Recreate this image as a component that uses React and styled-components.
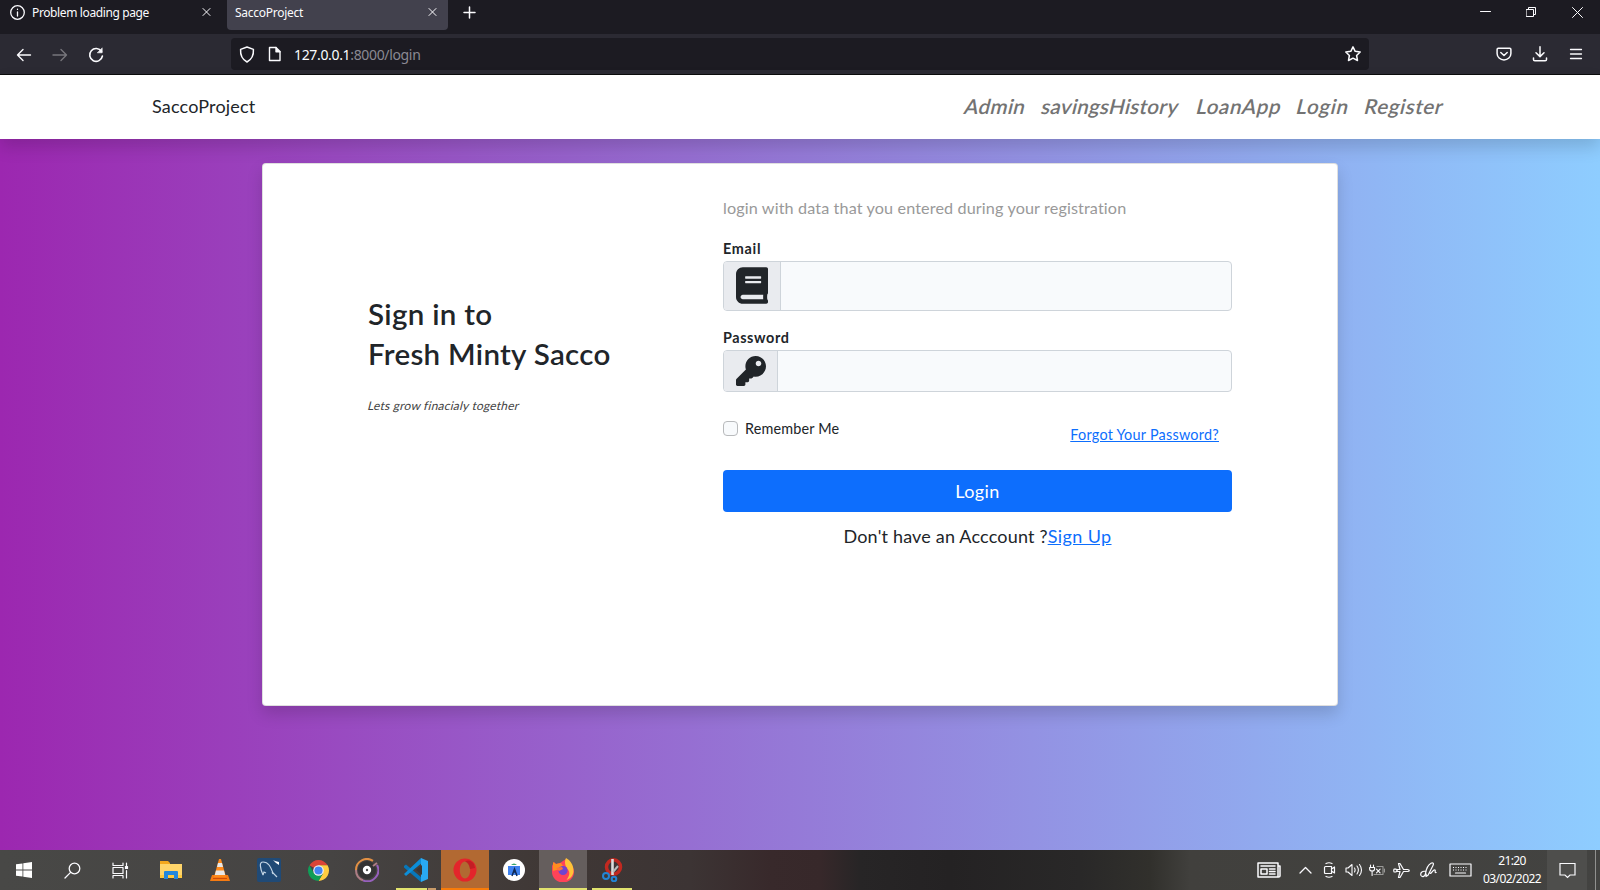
import React from "react";
import styled, { createGlobalStyle, css } from "styled-components";

const Global = createGlobalStyle`
  * { box-sizing: border-box; }
  body { margin: 0; overflow: hidden; font-family: Lato, "Noto Sans", sans-serif; color: #212529; }
  svg { display: block; flex: none; }
`;

const Screen = styled.div`
  width: 1600px;
  height: 890px;
  display: flex;
  flex-direction: column;
`;

/* ---------- browser chrome ---------- */
const TabBar = styled.div`
  height: 34px;
  display: flex;
  align-items: flex-start;
  background: #1c1b22;
  color: #fbfbfe;
  font: 12px/26px "Noto Sans", sans-serif;
`;
const Tab = styled.div`
  width: ${(p) => p.$w}px;
  height: 30px;
  display: flex;
  align-items: center;
  padding: 0 11px 5px ${(p) => (p.$active ? 8 : 10)}px;
  background: ${(p) => (p.$active ? "#42414d" : "transparent")};
  border-radius: 0 0 4px 4px;
`;
const TabTitle = styled.span`
  flex: 1;
  white-space: nowrap;
  letter-spacing: ${(p) => p.$ls || 0}px;
  padding-left: ${(p) => p.$pad || 0}px;
  padding-top: 1px;
`;
const NewTab = styled.div`
  padding: 6px 0 0 15px;
  flex: 1;
`;
const WindowButtons = styled.div`
  display: flex;
  gap: 35px;
  padding: 7px 17px 0 0;
`;
const ToolBar = styled.div`
  height: 41px;
  display: flex;
  align-items: center;
  background: #2b2a33;
  border-bottom: 1px solid #0c0c0d;
  padding: 0 16px;
`;
const NavButtons = styled.div`
  display: flex;
  gap: 20px;
  width: 215px;
  padding-top: 1px;
`;
const AddressBar = styled.div`
  width: 1138px;
  height: 32px;
  display: flex;
  align-items: center;
  gap: 12px;
  padding: 0 7px;
  background: #1c1b22;
  border-radius: 4px;
`;
const Url = styled.div`
  flex: 1;
  font: 14px "Noto Sans", sans-serif;
  letter-spacing: -0.34px;
  color: #8a8993;
  padding-top: 1px;
  b { font-weight: 400; color: #fbfbfe; }
`;
const ToolButtons = styled.div`
  display: flex;
  gap: 20px;
  margin-left: auto;
`;

/* ---------- web page ---------- */
const Page = styled.div`
  flex: 1;
  display: flex;
  flex-direction: column;
  background: linear-gradient(to right, #9c27b0, #8ecdff);
`;
const Navbar = styled.nav`
  height: 64px;
  display: flex;
  align-items: center;
  justify-content: space-between;
  padding: 0 156px 2px 152px;
  background: #fff;
  box-shadow: 0 8px 16px rgba(0, 0, 0, 0.15);
`;
const Brand = styled.span`
  font-size: 18px;
  letter-spacing: ${(p) => p.$ls}px;
`;
const NavLinks = styled.div`
  display: flex;
  gap: 16px;
`;
const NavLink = styled.a`
  width: ${(p) => p.$w}px;
  font: 600 20.5px/32px Lato, sans-serif;
  letter-spacing: ${(p) => p.$ls || 0}px;
  color: #737373;
  white-space: nowrap;
  transform: skewX(-14deg);
`;
const Card = styled.main`
  width: 1076px;
  height: 543px;
  margin: 24px auto 0;
  display: flex;
  background: #fff;
  border: 1px solid rgba(0, 0, 0, 0.125);
  border-radius: 4px;
  box-shadow: 0 8px 16px rgba(0, 0, 0, 0.15);
`;
const Intro = styled.section`
  width: 460px;
  padding: 130px 0 0 105px;
`;
const Heading = styled.h1`
  margin: 0;
  font: 600 29.5px/40px Lato, sans-serif;
  white-space: nowrap;
  letter-spacing: ${(p) => p.$ls}px;
`;
const Motto = styled.p`
  margin: 23px 0 0;
  font: 12px/18px Lato, sans-serif;
  letter-spacing: 0.22px;
  color: #444;
  transform: skewX(-14deg);
`;
const Form = styled.section`
  width: 509px;
  display: flex;
  flex-direction: column;
`;
const Hint = styled.p`
  margin: 32px 0 0;
  font-size: 16.2px;
  line-height: 24px;
  letter-spacing: 0.12px;
  color: #999;
`;
const Label = styled.label`
  margin-top: ${(p) => p.$top}px;
  height: 22px;
  font-size: 14.4px;
  line-height: 20px;
  font-weight: 700;
  letter-spacing: ${(p) => p.$ls}px;
`;
const Field = styled.div`
  height: ${(p) => p.$h}px;
  display: flex;
  border: 1px solid #ced4da;
  border-radius: 4px;
  background: #f8fafc;
  overflow: hidden;
`;
const Addon = styled.div`
  width: ${(p) => p.$w}px;
  display: flex;
  align-items: center;
  padding: 0 0 ${(p) => p.$pb || 0}px 12px;
  background: #e9ebef;
  border-right: 1px solid #ced4da;
`;
const Options = styled.div`
  display: flex;
  justify-content: space-between;
  height: 54px;
  margin-top: 24px;
`;
const Remember = styled.label`
  display: flex;
  gap: 7px;
  height: 24px;
  align-items: center;
  font-size: 14.4px;
  letter-spacing: 0.17px;
`;
const Check = styled.span`
  width: 15px;
  height: 15px;
  border: 1px solid #b8babc;
  border-radius: 4px;
  background: #f8fafc;
`;
const Link = styled.a`
  color: #0d6efd;
  text-decoration: underline;
  ${(p) =>
    p.$small &&
    css`
      font-size: 14.4px;
      line-height: 22px;
      margin: 8px 13px 0 0;
      letter-spacing: 0.25px;
    `}
`;
const Submit = styled.button`
  height: 42px;
  border: 0;
  border-radius: 4px;
  background: #0d6efd;
  color: #fff;
  font: 18px/28px Lato, sans-serif;
  letter-spacing: 0.4px;
`;
const SignUp = styled.p`
  margin: 11px 0 0;
  text-align: center;
  font-size: 18px;
  line-height: 27px;
  letter-spacing: 0.18px;
  ${Link} { letter-spacing: 0.4px; }
`;

/* ---------- taskbar ---------- */
const Taskbar = styled.footer`
  height: 40px;
  display: flex;
  background: linear-gradient(to right, #484846 0, #464443 330px, #3f3735 560px, #3c3434 690px, #38292b 770px, #37282a 820px, #272526 860px, #242223 950px, #292828 1080px, #31302c 1150px, #41403d 1190px, #434341 1600px);
`;
const Task = styled.div`
  width: 48px;
  height: 40px;
  margin-right: ${(p) => p.$gap || 0}px;
  display: flex;
  align-items: center;
  justify-content: center;
  background: ${(p) => p.$bg || "transparent"};
  box-shadow: ${(p) => (p.$line ? `inset 0 -2px ${p.$line}` : "none")};
`;
const Underlined = styled(Task)`
  background: linear-gradient(${(p) => p.$stripe}) no-repeat 4px 38px / 40px 2px;
`;
const Tray = styled.div`
  margin-left: auto;
  display: flex;
  align-items: center;
`;
const TrayIcon = styled.div`
  margin-right: ${(p) => p.$mr}px;
`;
const Clock = styled.div`
  width: 64px;
  text-align: center;
  color: #fff;
  font: 12px/18px "Noto Sans", sans-serif;
  letter-spacing: -0.6px;
  white-space: nowrap;
`;
const Notify = styled.div`
  width: 40px;
  height: 40px;
  margin-left: 3px;
  display: flex;
  align-items: center;
  justify-content: center;
  background: #4e4e4c;
`;
const ShowDesktop = styled.div`
  width: 5px;
  height: 40px;
  margin-left: 8px;
  border-left: 1px solid #91918f;
`;

const Svg = ({ w = 16, h = w, vb, children, color = "#fbfbfe", sw = 1.4 }) => (
  <svg width={w} height={h} viewBox={vb || `0 0 ${w} ${h}`} fill="none" stroke={color} strokeWidth={sw} strokeLinecap="round" strokeLinejoin="round">
    {children}
  </svg>
);
const Close = () => (
  <Svg w={9} sw={1}><path d="M1 .5l7 7M8 .5l-7 7" /></Svg>
);

export default function App() {
  return (
    <Screen>
      <Global />
      <TabBar>
        <Tab $w={227}>
          <Svg w={15} sw={1.3}><circle cx="7.5" cy="7.5" r="6.8" /><path d="M7.5 7v4M7.5 4.2v.2" /></Svg>
          <TabTitle $pad={7} $ls={-0.38}>Problem loading page</TabTitle>
          <TrayIcon $mr={5}><Close /></TrayIcon>
        </Tab>
        <Tab $w={221} $active>
          <TabTitle $ls={-0.27}>SaccoProject</TabTitle>
          <Close />
        </Tab>
        <NewTab><Svg w={13} sw={1.5}><path d="M6.5 1v11M1 6.5h11" /></Svg></NewTab>
        <WindowButtons>
          <Svg w={11} sw={1}><path d="M.5 4.5h10" /></Svg>
          <Svg w={11} sw={1}><path d="M.5 2.5h7v7h-7zM2.500 2.500v-2h7v7h-2" /></Svg>
          <Svg w={11} sw={1}><path d="M.5.5l10 10M10.5.5l-10 10" /></Svg>
        </WindowButtons>
      </TabBar>
      <ToolBar>
        <NavButtons>
          <Svg sw={1.4}><path d="M14.5 8H1.500M7 2.500L1.500 8 7 13.500" /></Svg>
          <Svg sw={1.4} color="#77767c"><path d="M1 8h13.500M9 2.500L14.500 8 9 13.500" /></Svg>
          <Svg sw={1.6}><path d="M13.5 4.500A6.400 6.400 0 1 0 14.400 9" /><path d="M14.200 1.200v4.600H9.600z" fill="#fbfbfe" strokeWidth=".6" /></Svg>
        </NavButtons>
        <AddressBar>
          <Svg w={18} h={17} sw={1.5}><path d="M9 1l6.400 2.400c.4 5.400-1.600 10-6.400 12.600C4.200 13.400 2.200 8.800 2.600 3.400z" /></Svg>
          <Svg w={14} h={16} sw={1.4}><path d="M1.500 1.500h6.500l4 4v9H1.500z" /><path d="M8 1.500v4.200h4" fill="#fbfbfe" /></Svg>
          <Url><b>127.0.0.1</b>:8000/login</Url>
          <Svg w={18} sw={1.5}><path d="M9 1.800l2.200 4.500 5 .7-3.600 3.500.9 5L9 13.200 4.500 15.500l.9-5L1.800 7l5-.7z" /></Svg>
        </AddressBar>
        <ToolButtons>
          <Svg sw={1.5}><path d="M2.300 2.200h11.400q1.200 0 1.200 1.200v4a6.900 6.500 0 0 1-13.800 0v-4q0-1.200 1.200-1.200zM4.800 6.500L8 9.500l3.200-3" /></Svg>
          <Svg sw={1.5}><path d="M8 .8v9.500M4 6.800l4 3.800 4-3.800M1.500 12v1.500q0 1.300 1.300 1.300h10.400q1.300 0 1.300-1.300V12" /></Svg>
          <Svg sw={1.3}><path d="M2.500 3.500h11M2.500 8h11M2.500 12.500h11" /></Svg>
        </ToolButtons>
      </ToolBar>

      <Page>
        <Navbar>
          <Brand $ls={0.18}>SaccoProject</Brand>
          <NavLinks>
            <NavLink $w={61} $ls={0.4}>Admin</NavLink>
            <NavLink $w={139} $ls={0.3}>savingsHistory</NavLink>
            <NavLink $w={84} $ls={0.6}>LoanApp</NavLink>
            <NavLink $w={52} $ls={0.7}>Login</NavLink>
            <NavLink $w={79} $ls={0.6}>Register</NavLink>
          </NavLinks>
        </Navbar>
        <Card>
          <Intro>
            <Heading $ls={0.3}>Sign in to<br />Fresh Minty Sacco</Heading>
            <Motto>Lets grow finacialy together</Motto>
          </Intro>
          <Form>
            <Hint>login with data that you entered during your registration</Hint>
            <Label $top={19} $ls={0.7}>Email</Label>
            <Field $h={50}>
              <Addon $w={57} $pb={2}>
                <svg width="32" height="37" viewBox="0 0 448 512"><path fill="#212529" d="M448 360V24c0-13.300-10.700-24-24-24H96C43 0 0 43 0 96v320c0 53 43 96 96 96h328c13.300 0 24-10.700 24-24v-16c0-7.500-3.500-14.300-8.900-18.700-4.200-15.400-4.200-59.300 0-74.700 5.400-4.300 8.900-11.100 8.900-18.600zM128 134c0-3.300 2.700-6 6-6h212c3.300 0 6 2.700 6 6v20c0 3.300-2.700 6-6 6H134c-3.300 0-6-2.700-6-6v-20zm0 64c0-3.300 2.700-6 6-6h212c3.300 0 6 2.700 6 6v20c0 3.300-2.700 6-6 6H134c-3.300 0-6-2.700-6-6v-20zm253.400 250H96c-17.700 0-32-14.300-32-32 0-17.600 14.400-32 32-32h285.400c-1.900 17.100-1.900 46.900 0 64z" /></svg>
              </Addon>
            </Field>
            <Label $top={17} $ls={0.6}>Password</Label>
            <Field $h={42}>
              <Addon $w={54}>
                <svg width="30" height="30" viewBox="0 0 512 512"><path fill="#212529" d="M512 176.001C512 273.203 433.202 352 336 352c-11.220 0-22.190-1.062-32.827-3.069l-24.012 27.014A23.999 23.999 0 0 1 261.223 384H224v40c0 13.255-10.745 24-24 24h-40v40c0 13.255-10.745 24-24 24H24c-13.255 0-24-10.745-24-24v-78.059c0-6.365 2.529-12.470 7.029-16.971l161.802-161.802C163.108 213.814 160 195.271 160 176 160 78.798 238.797.001 335.999 0 433.488-.001 512 78.511 512 176.001zM336 128c0 26.510 21.490 48 48 48s48-21.490 48-48-21.490-48-48-48-48 21.490-48 48z" /></svg>
              </Addon>
            </Field>
            <Options>
              <Remember><Check />Remember Me</Remember>
              <Link $small>Forgot Your Password?</Link>
            </Options>
            <Submit>Login</Submit>
            <SignUp>Don't have an Acccount ?<Link>Sign Up</Link></SignUp>
          </Form>
        </Card>
      </Page>

      <Taskbar>
        <Task><svg width="16" height="16" viewBox="0 0 16 16"><path fill="#fff" d="M0 2.300L6.500 1.400v6.200H0zM7.300 1.300L16 0v7.600H7.300zM0 8.400h6.500v6.200L0 13.700zM7.300 8.400H16V16l-8.700-1.300z" /></svg></Task>
        <Task><Svg w={17} sw={1.3}><circle cx="10.500" cy="6.500" r="5.300" /><path d="M6.600 10.400L1 16" /></Svg></Task>
        <Task $gap={3}><Svg w={17} sw={1.2}><path d="M1 1v2.500h10V1M1 5.500h10v6H1zM1 16v-2.500h10V16M14.500 1v2.500M14.500 8.500V16" /><path fill="#fff" d="M13.500 4.500h2v2h-2z" /></Svg></Task>
        <Task $gap={1}><svg width="22" height="20" viewBox="0 0 22 20"><path fill="#f4a81d" d="M0 1h8l2 2v3H0z" /><path fill="#ffd56a" d="M0 4h22v14H0z" /><path fill="#ffc83d" d="M0 15h22v3H0z" /><path fill="#2387dc" d="M4 19v-7q0-1 1-1h12q1 0 1 1v7h-4v-4H8v4z" /></svg></Task>
        <Task $gap={1}><svg width="20" height="24" viewBox="0 0 20 24"><path fill="#f57b12" d="M2 17h16l2 6H0z" /><path fill="#ff8a1c" d="M9 1h2l5 18H4z" /><path fill="#e8e8e8" d="M8 5h4l1 4H7zM6 12.500h8l1.200 4.500H4.800z" /><path fill="#cf4b08" d="M3 20h14v1H3z" /></svg></Task>
        <Task $gap={1}><svg width="24" height="24" viewBox="0 0 24 24"><rect width="24" height="24" rx="2" fill="#204a76" /><path fill="none" stroke="#c3d5e5" strokeWidth="1.200" d="M6 17C3 10 2 4 6 4c6 0 8 6 10 11l4 4M6 17l1-3 2 1M15 14l1 2" /><path fill="#fff" d="M16 2l2 1 4 1v3l-3-2z" /></svg></Task>
        <Task $gap={1}><svg width="23" height="23" viewBox="0 0 48 48"><path fill="#db4437" d="M24 24L5 13A22 22 0 0 1 43 13H24z" /><path fill="#ffcd40" d="M24 13h19A22 22 0 0 1 24 46l9.500-16.500z" /><path fill="#0f9d58" d="M5 13l9.500 16.500L33.500 29.500L24 46A22 22 0 0 1 5 13z" /><circle cx="24" cy="24" r="11" fill="#f1f1f1" /><circle cx="24" cy="24" r="8.500" fill="#4285f4" /></svg></Task>
        <Task $gap={1}><svg width="24" height="24" viewBox="0 0 24 24" fill="none"><circle cx="12" cy="12" r="9" fill="#333" /><path stroke="#e29044" strokeWidth="2" d="M1 12A11 11 0 0 1 18 2.800" /><path stroke="#9660bc" strokeWidth="2" d="M22 7A11 11 0 0 1 8 22.300" /><path stroke="#ad7d84" strokeWidth="2" d="M8 22.300A11 11 0 0 1 1 12M22 5l-4 3" /><circle cx="12" cy="12" r="2.700" fill="#555" stroke="#fff" strokeWidth="3" /></svg></Task>
        <Underlined $gap={1} $stripe="to right, #e1e26e 31px, #54453e 31px, #54453e 32px, #c89b69 32px"><svg width="24" height="24" viewBox="0 0 24 24"><path fill="#0877b9" d="M0 8l2-1.500 16 13.500-1 4L0 9.500z" /><path fill="#0c8ed9" d="M0 16l17-16 2 4L2 18z" /><path fill="#29a9f2" d="M17 0l7 3v18l-7 3z" /><path fill="#3a3534" d="M18 7v10l-6-5z" /></svg></Underlined>
        <Task $gap={1} $bg="#b26932" $line="#f87b09"><svg width="24" height="24" viewBox="0 0 24 24"><path fill="#e3252b" fillRule="evenodd" d="M12 .5a11.500 11.500 0 1 1 0 23 11.500 11.500 0 0 1 0-23zM12 3.500c-3 0-5.200 3.800-5.200 8.500s2.200 8.500 5.200 8.500 5.200-3.800 5.200-8.500S15 3.500 12 3.500z" /><path fill="#b51a22" d="M12 3.500q5-3 9 2.500l1 4-5 1q-1-6-5-7.500z" opacity=".7" /></svg></Task>
        <Task $gap={1}><svg width="22" height="22" viewBox="0 0 22 22"><circle cx="11" cy="11" r="11" fill="#fff" /><path fill="#3f82ef" d="M5 7h12v9H5z" /><path fill="#38a66b" d="M8 6q3-3 6 0z" /><path fill="none" stroke="#102a55" strokeWidth="1.500" d="M9 17l2.500-7 2.500 7M10 13h3" /></svg></Task>
        <Task $gap={1} $bg="#655e5d" $line="#e1e26e"><svg width="24" height="24" viewBox="0 0 24 24"><path fill="#ff4358" d="M1 8l2-4 2 2 4-1 6-4 4 4c3 3 4 6 4 9a11 10.500 0 0 1-22 0z" /><path fill="#ffc338" d="M15 0c4 2 8 7 7.500 14-1 5-4 7-7 8 3-4 4-8 1-11-3-4-3-8-1.500-11z" /><path fill="#ff8d20" d="M2 4l3 2 5-1 2 3-3 3-7 2z" /><circle cx="12" cy="12.500" r="4.600" fill="#7144cf" /><path fill="#ff7139" d="M5 10l6-1 1 2-4 2z" /></svg></Task>
        <Underlined $stripe="#e1e26e, #e1e26e"><svg width="22" height="24" viewBox="0 0 22 24" fill="none"><ellipse cx="12.500" cy="9" rx="7" ry="7.200" stroke="#c22920" strokeWidth="3.500" /><path stroke="#ddd" strokeWidth="2.600" d="M11.500 1v16" /><path stroke="#bbb" strokeWidth="2" d="M17 8l-5 6" /><circle cx="5" cy="18" r="3" stroke="#2384d4" strokeWidth="2" /><circle cx="13" cy="21" r="2.300" stroke="#2384d4" strokeWidth="2" /></svg></Underlined>
        <Tray>
          <TrayIcon $mr={18}><Svg w={24} h={16} sw={1.5}><path d="M1 1h20v14H1zM21 4h2v10q0 1-1.500 1H20M4 4h14M4 7h6v5H4zM12.500 7H18M12.500 9.500H18M12.500 12H18" /></Svg></TrayIcon>
          <TrayIcon $mr={11}><Svg w={13} h={8} sw={1.3}><path d="M1 7l5.500-5.500L12 7" /></Svg></TrayIcon>
          <TrayIcon $mr={9}><Svg w={13} h={16} sw={1.2}><path d="M2.500 4.500h6v7h-6q-1 0-1-1v-5q0-1 1-1zM8.500 7l3-2v6l-3-2M3 1.500q3-1.500 6 0M3 14.500q3 1.500 6 0" /></Svg></TrayIcon>
          <TrayIcon $mr={6}><Svg w={18} h={14} sw={1.1}><path d="M1 5h2l4-3.500v11L3 9H1zM9.500 5q1.200 2 0 4M12 3q2.800 4 0 8M14.500 1.500q4 5.500 0 11" /></Svg></TrayIcon>
          <TrayIcon $mr={8}><Svg w={16} h={13} sw={1.1}><path d="M1.500 1v2M4.500 1v2M.6 3.500h5v1.500q0 2-2.500 2T.6 5zM3.100 7.500v4M7.500 5.200l3.600 3.600M11.100 5.200L7.500 8.800" /><path stroke="#9a9a98" d="M8 2.500h6v8H5M15.500 5v3" /></Svg></TrayIcon>
          <TrayIcon $mr={10}><Svg w={17} sw={1.2}><path d="M1 7l2 .1 1.200 1.400-1.200 1.400L1 10l-.3-1.500zM4.200 7.500H7L5.500 1.500H7L10.500 7.500h4q1.800 0 1.800 1t-1.800 1h-4L7 15.500H5.500L7 9.500H4.200" /></Svg></TrayIcon>
          <TrayIcon $mr={12}><Svg w={17} sw={1.2}><path d="M6 9.500C2 8.500 0 11 1 13.500c1.500 2 4 1 4.500-2C6 8 8 3 11 1.200c2-1 3 .3 2 2.300L8 13.200l-2 1.300.2-2.500M10 11c1 2 3-4 5-3 1 .6-1 3 1.200 2.500" /></Svg></TrayIcon>
          <TrayIcon $mr={8}><Svg w={23} h={14} sw={1.2}><path d="M1 1h21v12H1z" /><path strokeDasharray="1 1.500" strokeLinecap="butt" d="M4 4.500h15M4 7h15" /><path d="M6.500 10h10" /></Svg></TrayIcon>
          <Clock>21:20<br />03/02/2022</Clock>
          <Notify><Svg w={17} h={17} sw={1.2}><path d="M1 1.500h15v11.500h-5L8.500 15.500 6 13H1z" strokeLinejoin="miter" /></Svg></Notify>
          <ShowDesktop />
        </Tray>
      </Taskbar>
    </Screen>
  );
}
